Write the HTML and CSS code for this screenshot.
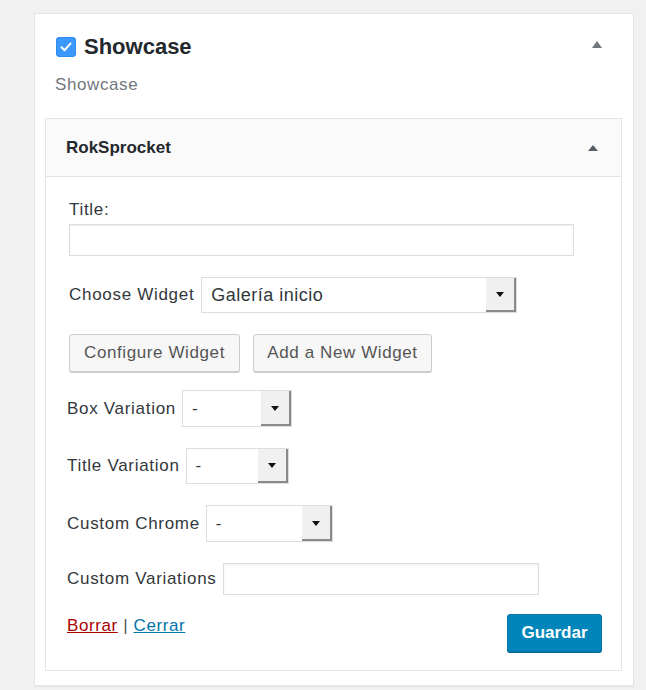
FILE: index.html
```html
<!DOCTYPE html>
<html>
<head>
<meta charset="utf-8">
<link rel="stylesheet" href="styles.css">
</head>
<body>
<div class="page">
  <div class="card">
    <div class="card-head">
      <div class="card-title">
        <span class="checkbox"><svg width="12" height="10" viewBox="0 0 12 10"><path d="M1.5 5.2 L4.6 8.2 L10.5 1.6" fill="none" stroke="#fff" stroke-width="2" stroke-linecap="round" stroke-linejoin="round"/></svg></span>
        <span class="title-text">Showcase</span>
      </div>
      <span class="toggle"></span>
    </div>
    <div class="card-sub">Showcase</div>

    <div class="panel">
      <div class="panel-head">
        <span class="panel-title">RokSprocket</span>
        <span class="toggle small"></span>
      </div>
      <div class="panel-body">
        <div class="indent">
          <div class="label-line">Title:</div>
          <input class="text-input wide" type="text">
          <div class="row choose">
            <span class="label">Choose Widget</span>
            <div class="select w-choose"><span class="select-val big">Galería inicio</span><span class="arrow"></span></div>
          </div>
          <div class="btn-row">
            <span class="btn btn-configure">Configure Widget</span>
            <span class="btn btn-add">Add a New Widget</span>
          </div>
        </div>
        <div class="row r-box">
          <span class="label">Box Variation</span>
          <div class="select w-box"><span class="select-val">-</span><span class="arrow"></span></div>
        </div>
        <div class="row">
          <span class="label">Title Variation</span>
          <div class="select w-title"><span class="select-val">-</span><span class="arrow"></span></div>
        </div>
        <div class="row">
          <span class="label">Custom Chrome</span>
          <div class="select w-chrome"><span class="select-val">-</span><span class="arrow"></span></div>
        </div>
        <div class="row">
          <span class="label">Custom Variations</span>
          <input class="text-input w-var" type="text">
        </div>
        <div class="footer">
          <div class="links"><a class="link-delete" href="#">Borrar</a> <span class="sep">|</span> <a class="link-close" href="#">Cerrar</a></div>
          <span class="btn-primary">Guardar</span>
        </div>
      </div>
    </div>
  </div>
</div>
</body>
</html>
```

FILE: styles.css
```css
* { box-sizing: border-box; }
html, body { margin: 0; padding: 0; }
body {
  background: #f1f1f1;
  font-family: "Liberation Sans", Arial, sans-serif;
  color: #444;
  width: 646px;
  height: 690px;
  overflow: hidden;
}
.page {
  padding: 13px 0 0 34px;
}
.card {
  width: 600px;
  background: #fff;
  border: 1px solid #e5e5e5;
  box-shadow: 0 1px 1px rgba(0,0,0,0.04);
  padding-bottom: 14px;
}
.card-head {
  display: flex;
  align-items: center;
  justify-content: space-between;
  padding: 22px 31px 0 21px;
  height: 43px;
}
.card-title {
  display: flex;
  align-items: center;
  gap: 8px;
}
.checkbox {
  width: 20px;
  height: 20px;
  border-radius: 4px;
  background: #3b99fc;
  display: flex;
  align-items: center;
  justify-content: center;
  box-shadow: inset 0 0 0 1px #2f8cf0;
}
.title-text {
  font-size: 22px;
  font-weight: bold;
  color: #23282d;
  line-height: 21px;
}
.toggle {
  width: 0; height: 0;
  border-left: 5px solid transparent;
  border-right: 5px solid transparent;
  border-bottom: 7px solid #72777c;
  margin-top: -4px;
}
.toggle.small {
  border-left-width: 5px;
  border-right-width: 5px;
  border-bottom: 6px solid #555d66;
  margin-top: 0;
}
.card-sub {
  margin: 18px 0 0 20px;
  font-size: 17px;
  line-height: 20px;
  letter-spacing: 0.6px;
  color: #72777c;
}
.panel {
  margin: 23px 11px 0 10px;
  border: 1px solid #e5e5e5;
  background: #fff;
}
.panel-head {
  height: 58px;
  background: #fafafa;
  border-bottom: 1px solid #e5e5e5;
  display: flex;
  align-items: center;
  justify-content: space-between;
  padding: 0 23px 0 20px;
}
.panel-title {
  font-size: 17px;
  font-weight: bold;
  color: #23282d;
}
.panel-body {
  padding: 23px 19px 18px 21px;
}
.indent {
  padding-left: 2px;
}
.label-line, .label {
  font-size: 17px;
  line-height: 20px;
  letter-spacing: 0.7px;
  color: #32373c;
  white-space: nowrap;
}
.text-input {
  display: block;
  height: 32px;
  border: 1px solid #ddd;
  box-shadow: inset 0 1px 2px rgba(0,0,0,0.07);
  background: #fff;
  margin: 0;
  padding: 0;
  outline: none;
}
.wide { width: 505px; margin-top: 4px; }
.w-var { width: 316px; }
.row {
  display: flex;
  align-items: center;
  gap: 6px;
  margin-top: 21px;
}
.r-box { margin-top: 18px; }
.choose { gap: 7px; }
.select {
  display: flex;
  align-items: stretch;
  height: 37px;
  border: 1px solid #ddd;
  background: #fff;
}
.select-val {
  flex: 1;
  display: flex;
  align-items: center;
  padding-left: 9px;
  font-size: 17px;
  color: #32373c;
}
.select-val.big { font-size: 18px; letter-spacing: 0.5px; }
.arrow {
  width: 30px;
  background: #f0f0f0;
  border-right: 2px solid #8a8a8a;
  border-bottom: 2px solid #8a8a8a;
  position: relative;
}
.arrow::after {
  content: "";
  position: absolute;
  left: 50%;
  top: 50%;
  margin-left: -4px;
  margin-top: -2px;
  border-left: 4px solid transparent;
  border-right: 4px solid transparent;
  border-top: 5px solid #111;
}
.w-choose { width: 316px; height: 36px; }
.w-box { width: 110px; }
.w-title { width: 103px; height: 36px; }
.w-chrome { width: 127px; }
.btn-row {
  display: flex;
  gap: 13px;
  margin-top: 21px;
}
.btn {
  display: flex;
  align-items: center;
  justify-content: center;
  height: 38px;
  background: #f7f7f7;
  border: 1px solid #ccc;
  border-radius: 3px;
  box-shadow: 0 1px 0 #ccc;
  font-size: 17px;
  letter-spacing: 0.6px;
  color: #555;
}
.btn-configure { width: 171px; }
.btn-add { width: 179px; }
.footer {
  display: flex;
  justify-content: space-between;
  align-items: flex-start;
  margin-top: 19px;
}
.links {
  padding-top: 2px;
  font-size: 17px;
  line-height: 20px;
  letter-spacing: 0.6px;
}
.link-delete { color: #a00; text-decoration: underline; }
.link-close { color: #0073aa; text-decoration: underline; }
.sep { color: #555; }
.btn-primary {
  display: flex;
  align-items: center;
  justify-content: center;
  width: 95px;
  height: 38px;
  background: #0085ba;
  border: 1px solid #0073aa;
  border-radius: 3px;
  box-shadow: 0 1px 0 #006799;
  color: #fff;
  font-size: 17px;
  font-weight: bold;
}
```
